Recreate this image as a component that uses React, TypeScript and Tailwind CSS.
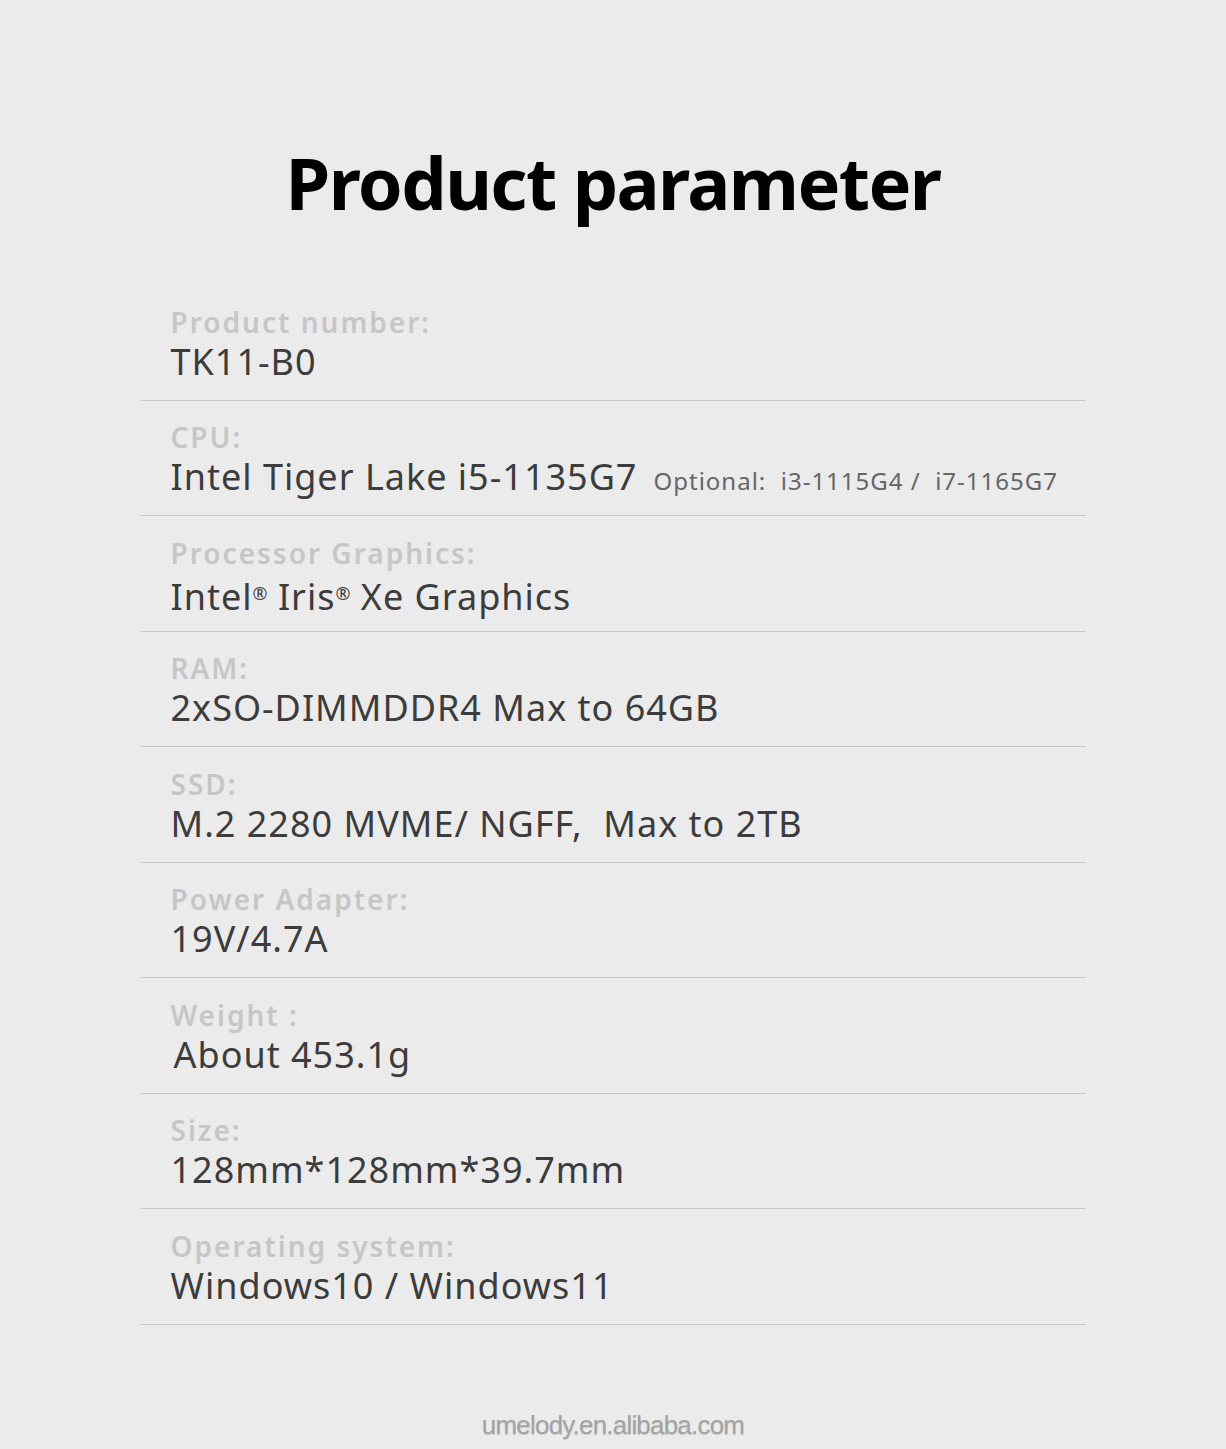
const specs = [
  { label: "Product number:", value: "TK11-B0" },
  { label: "CPU:", value: "Intel Tiger Lake i5-1135G7", extra: "Optional:  i3-1115G4 /  i7-1165G7" },
  { label: "Processor Graphics:", value: "Intel® Iris® Xe Graphics", reg: true },
  { label: "RAM:", value: "2xSO-DIMMDDR4 Max to 64GB" },
  { label: "SSD:", value: "M.2 2280 MVME/ NGFF,  Max to 2TB" },
  { label: "Power Adapter:", value: "19V/4.7A" },
  { label: "Weight :", value: "About 453.1g", shift: true },
  { label: "Size:", value: "128mm*128mm*39.7mm" },
  { label: "Operating system:", value: "Windows10 / Windows11" },
];

function Value({ text, reg }: { text: string; reg?: boolean }) {
  if (!reg) return <>{text}</>;
  // small raised ® marks like the reference
  const parts = text.split("®");
  return (
    <>
      {parts.map((p, i) => (
        <span key={i}>
          {p}
          {i < parts.length - 1 && <span className="text-[18px] align-[10px] tracking-normal">®</span>}
        </span>
      ))}
    </>
  );
}

export default function App() {
  return (
    <div className="w-full min-h-[1449px] bg-[#ebebeb] flex flex-col items-center font-['Noto_Sans',sans-serif]">
      <h1 className="pt-[146px] text-[72px] leading-[72px] font-bold text-black tracking-[-1.6px]">
        Product parameter
      </h1>
      <div className="mt-[67px] w-[945px] flex flex-col">
        {specs.map((s) => (
          <div key={s.label} className="h-[115.5px] border-b border-[#c9c9c9] pl-[30px] pt-[19.5px]">
            <div className="text-[28px] leading-[34px] font-semibold text-[#c6c6c6] tracking-[2px]">
              {s.label}
            </div>
            <div className={"mt-[2px] flex items-baseline text-[#3c3c3c] " + (s.shift ? "pl-[3px]" : "")}>
              <span className="text-[36px] leading-[42px] tracking-[1px] whitespace-pre">
                <Value text={s.value} reg={s.reg} />
              </span>
              {s.extra && (
                <span className="ml-[16px] text-[24px] leading-[30px] text-[#666666] tracking-[1px] whitespace-pre">
                  {s.extra}
                </span>
              )}
            </div>
          </div>
        ))}
      </div>
      <div className="mt-[86px] text-[26px] leading-[28px] text-[#a3a3a3] tracking-[-0.8px] font-['Liberation_Sans',sans-serif] [text-shadow:0_1px_1px_rgba(0,0,0,0.15)]">
        umelody.en.alibaba.com
      </div>
    </div>
  );
}
